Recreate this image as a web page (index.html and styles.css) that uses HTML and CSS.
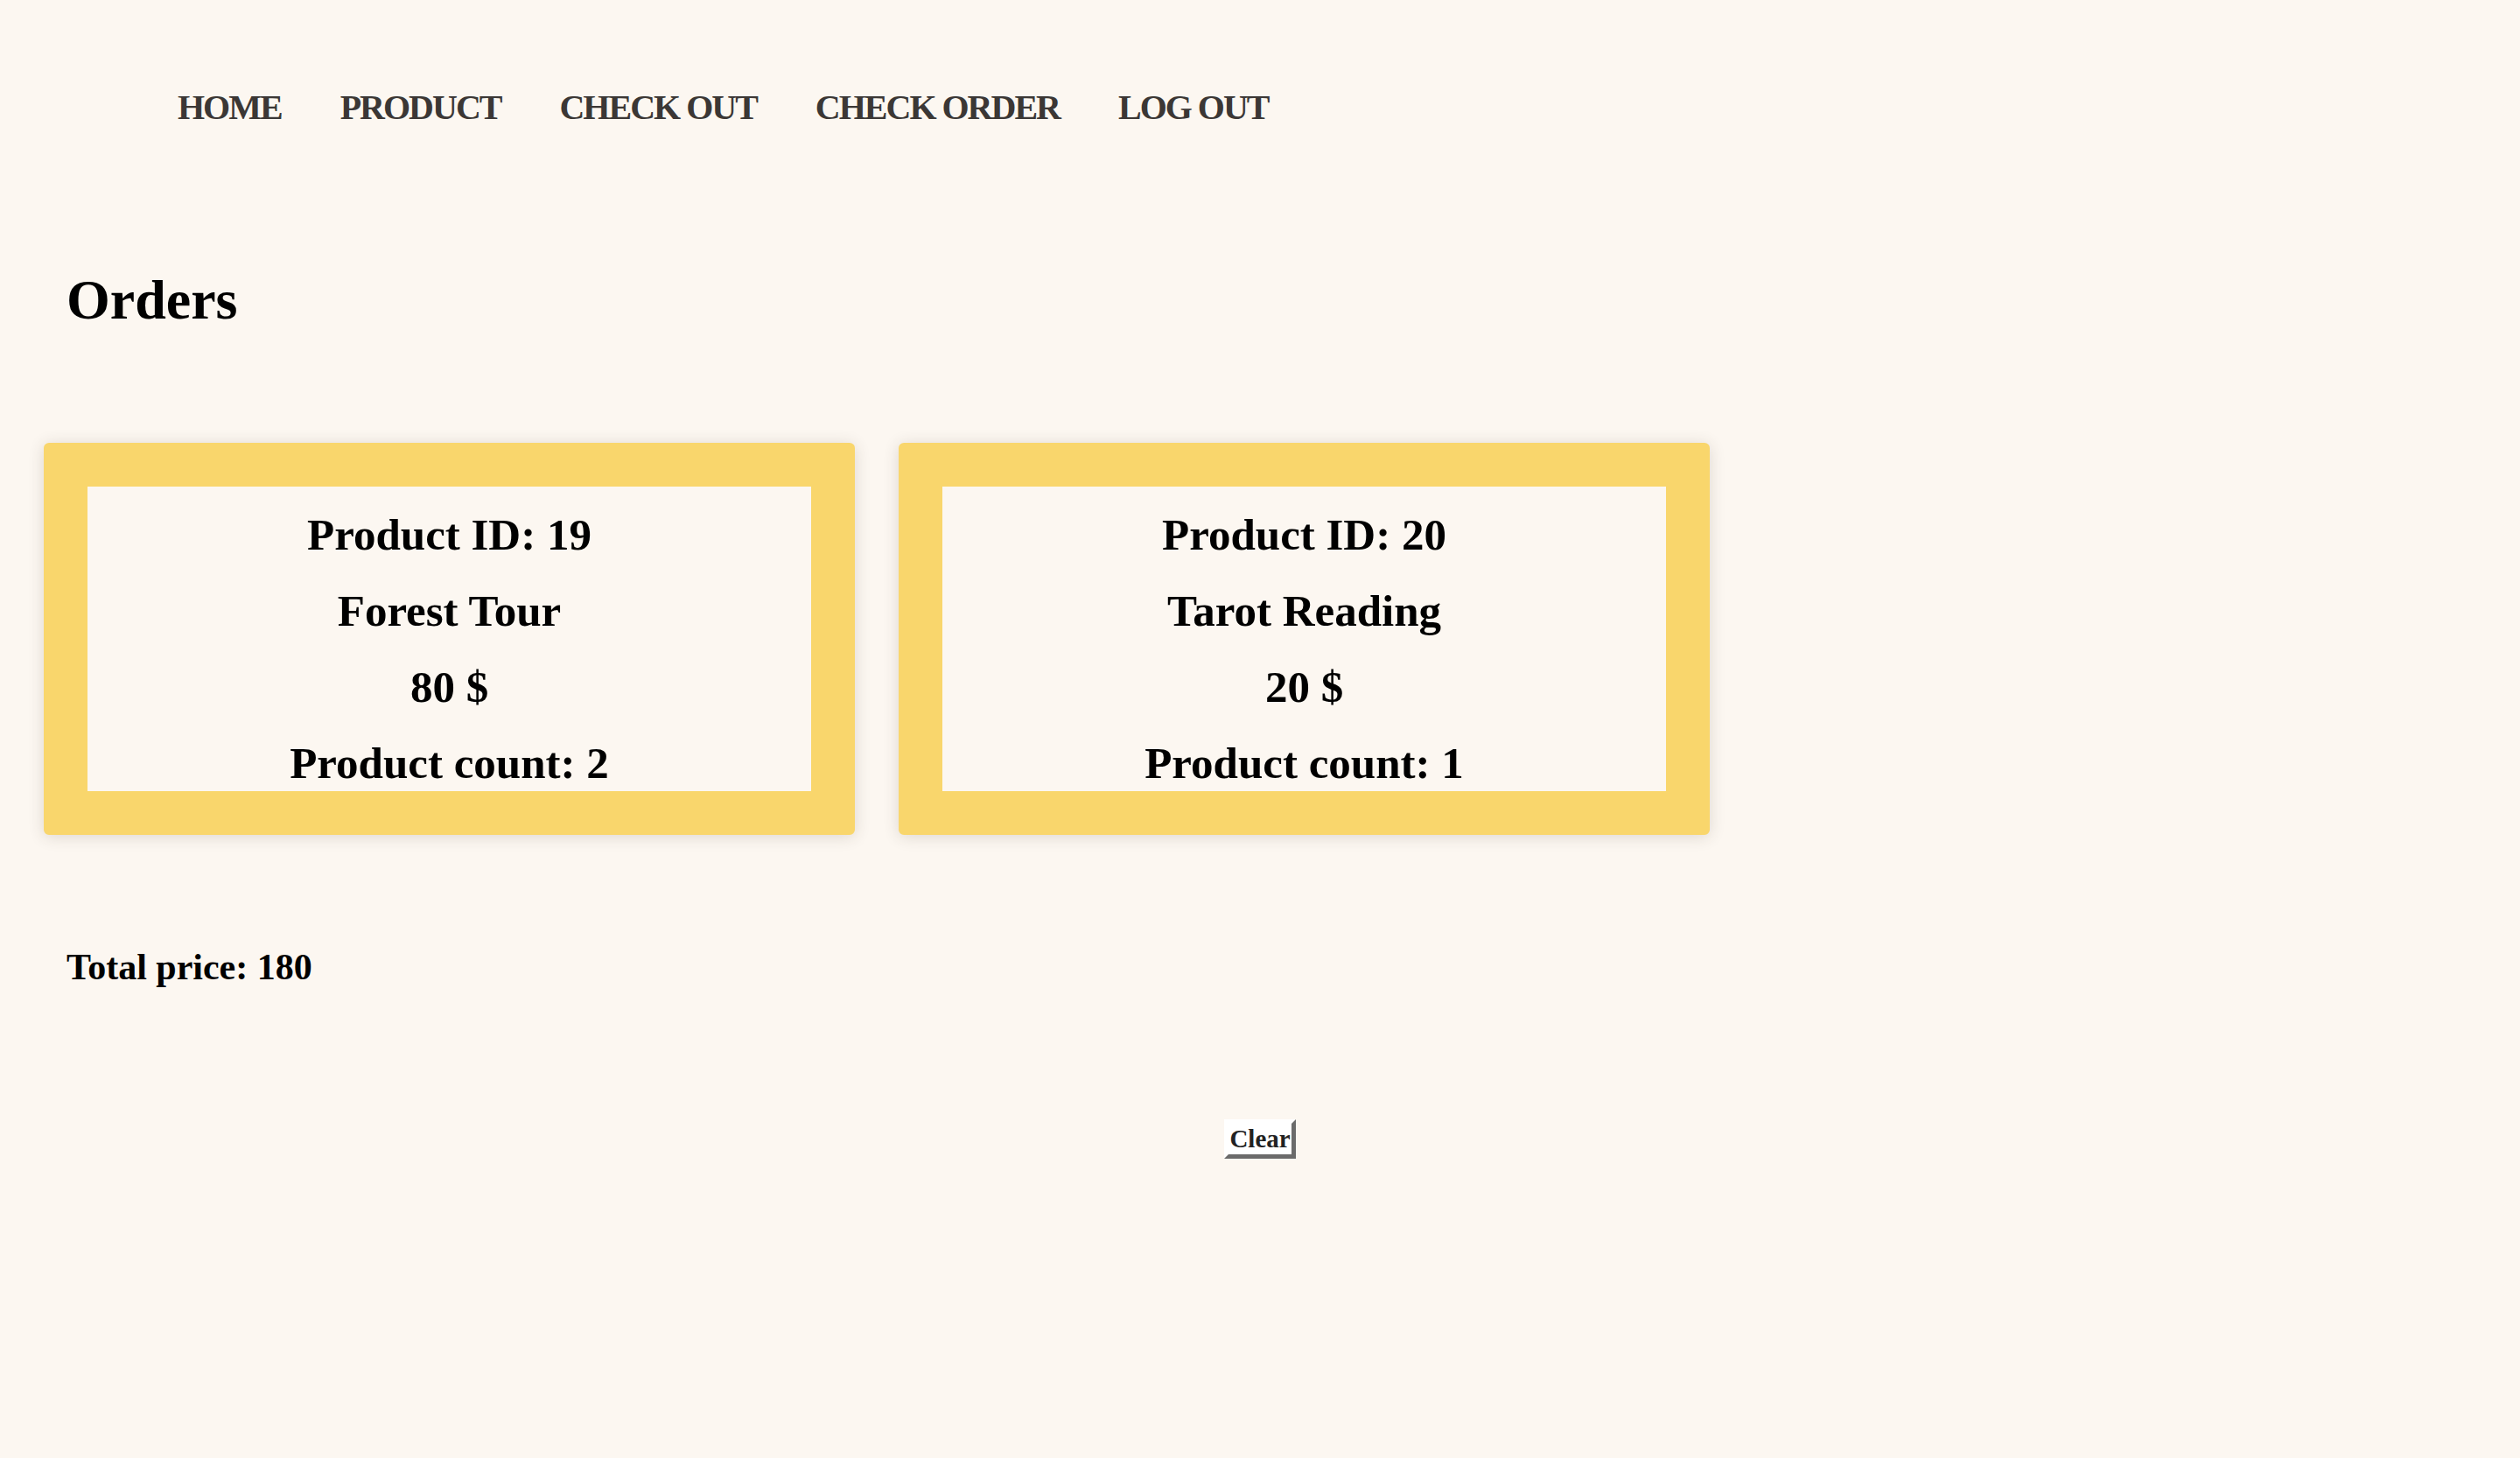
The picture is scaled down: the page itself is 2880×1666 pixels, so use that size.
FILE: index.html
```html
<!DOCTYPE html>
<html lang="en">
<head>
<meta charset="utf-8">
<title>Orders</title>
<link rel="stylesheet" href="styles.css">
</head>
<body>
<nav class="nav">
  <a class="nav-link" href="#">HOME</a>
  <a class="nav-link" href="#">PRODUCT</a>
  <a class="nav-link" href="#">CHECK OUT</a>
  <a class="nav-link" href="#">CHECK ORDER</a>
  <a class="nav-link" href="#">LOG OUT</a>
</nav>
<main class="main">
  <h1 class="title">Orders</h1>
  <section class="cards">
    <div class="card">
      <div class="card-inner">
        <p class="card-line">Product ID: 19</p>
        <p class="card-line">Forest Tour</p>
        <p class="card-line">80 $</p>
        <p class="card-line">Product count: 2</p>
      </div>
    </div>
    <div class="card">
      <div class="card-inner">
        <p class="card-line">Product ID: 20</p>
        <p class="card-line">Tarot Reading</p>
        <p class="card-line">20 $</p>
        <p class="card-line">Product count: 1</p>
      </div>
    </div>
  </section>
  <p class="total">Total price: 180</p>
  <div class="actions">
    <button class="clear-btn" type="button">Clear</button>
  </div>
</main>
</body>
</html>
```
FILE: styles.css
```css
html, body {
  margin: 0;
  padding: 0;
}
body {
  background: #fcf7f1;
  font-family: "Liberation Serif", "Times New Roman", serif;
  color: #000;
  min-height: 1666px;
}
.nav {
  display: flex;
  gap: 67px;
  padding: 99px 0 0 203px;
}
.nav-link {
  font-size: 40px;
  font-weight: bold;
  letter-spacing: -2px;
  color: #3b3735;
  text-decoration: none;
  line-height: normal;
}
.main {
  padding: 0 0 0 50px;
}
.title {
  margin: 160px 0 0 26px;
  font-size: 64px;
  font-weight: bold;
  line-height: normal;
}
.cards {
  display: flex;
  gap: 50px;
  margin-top: 126px;
}
.card {
  box-sizing: border-box;
  width: 927px;
  height: 448px;
  border: 50px solid #f9d66c;
  border-radius: 6px;
  background: #fcf7f1;
  box-shadow: 0 2px 18px rgba(60, 50, 40, 0.16);
}
.card-inner {
  box-sizing: border-box;
  height: 348px;
  padding-top: 12px;
  text-align: center;
}
.card-line {
  margin: 0;
  font-size: 51px;
  font-weight: bold;
  line-height: 87px;
  white-space: nowrap;
}
.total {
  margin: 127px 0 0 26px;
  font-size: 42px;
  font-weight: bold;
  line-height: normal;
}
.actions {
  display: flex;
  justify-content: center;
  margin-top: 150px;
  margin-left: -50px;
}
.clear-btn {
  font-family: "Liberation Serif", "Times New Roman", serif;
  font-size: 29px;
  font-weight: bold;
  color: #222;
  background: #fff;
  border-style: solid;
  border-width: 5px;
  border-color: #fff #6b6b6b #6b6b6b #fff;
  padding: 1px 1px;
  line-height: normal;
  margin: 0;
}
```
